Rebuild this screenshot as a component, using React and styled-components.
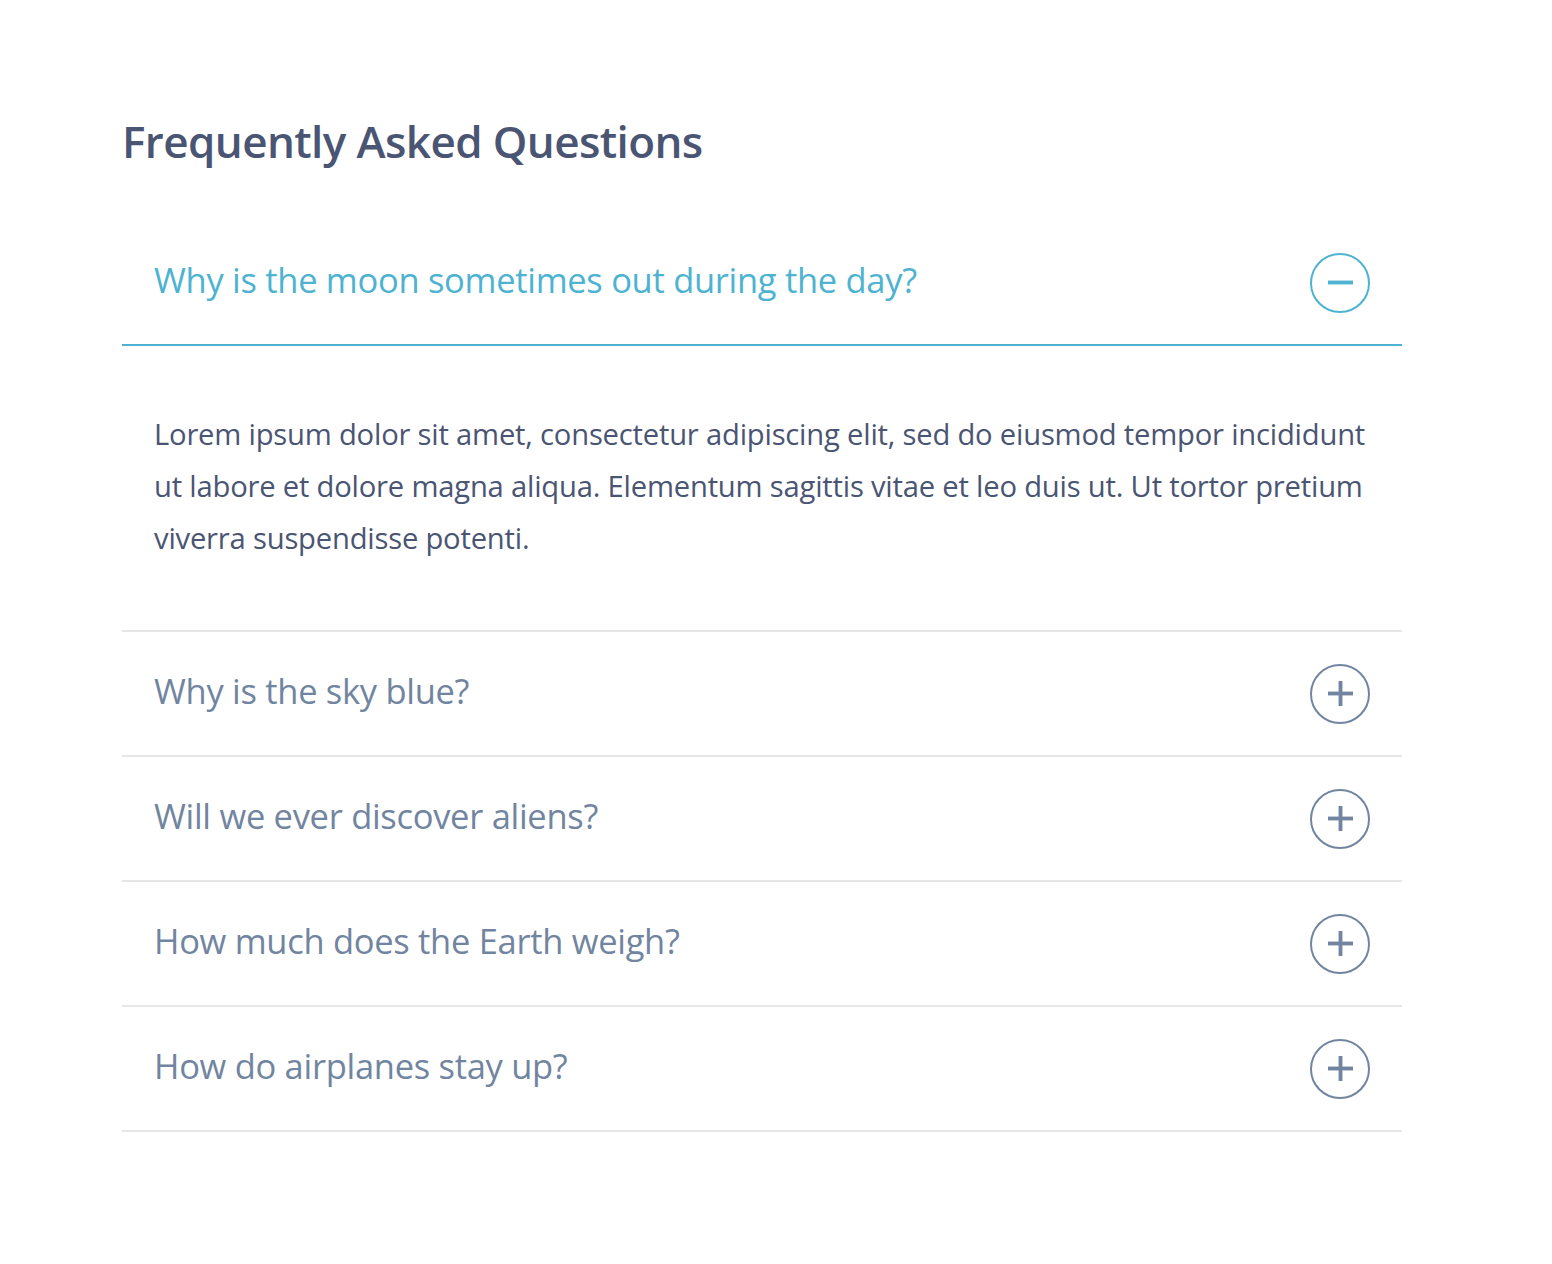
import { useState } from 'react'
import styled, { createGlobalStyle } from 'styled-components'

const questions = [
  {
    q: 'Why is the moon sometimes out during the day?',
    a: 'Lorem ipsum dolor sit amet, consectetur adipiscing elit, sed do eiusmod tempor incididunt ut labore et dolore magna aliqua. Elementum sagittis vitae et leo duis ut. Ut tortor pretium viverra suspendisse potenti.',
  },
  { q: 'Why is the sky blue?', a: 'Lorem ipsum dolor sit amet, consectetur adipiscing elit.' },
  { q: 'Will we ever discover aliens?', a: 'Lorem ipsum dolor sit amet, consectetur adipiscing elit.' },
  { q: 'How much does the Earth weigh?', a: 'Lorem ipsum dolor sit amet, consectetur adipiscing elit.' },
  { q: 'How do airplanes stay up?', a: 'Lorem ipsum dolor sit amet, consectetur adipiscing elit.' },
]

export default function App() {
  const [open, setOpen] = useState(0)

  return (
    <>
      <GlobalStyle />
      <Container>
        <Title>Frequently Asked Questions</Title>
        <List>
          {questions.map((item, i) => {
            const active = open === i
            return (
              <Item key={i} active={active}>
                <Question active={active} onClick={() => setOpen(active ? -1 : i)}>
                  <QuestionText>{item.q}</QuestionText>
                  <Toggle>
                    <svg viewBox="0 0 26 26">
                      <rect x="0" y="11" width="26" height="4" fill="currentColor" />
                      {!active && <rect x="11" y="0" width="4" height="26" fill="currentColor" />}
                    </svg>
                  </Toggle>
                </Question>
                {active && <Answer>{item.a}</Answer>}
              </Item>
            )
          })}
        </List>
      </Container>
    </>
  )
}

const GlobalStyle = createGlobalStyle`
  body {
    margin: 0;
    background: #fff;
    font-family: "Open Sans", "Noto Sans", sans-serif;
  }
`
const Container = styled.div`
  width: 1280px;
  margin: 0 0 0 122px;
  padding-top: 109px;
  padding-bottom: 130px;
`
const Title = styled.h1`
  margin: 0 0 48px;
  font-size: 44px;
  line-height: 64px;
  font-weight: 600;
  color: #4a5573;
  letter-spacing: -0.6px;
`
const List = styled.div`
  display: flex;
  flex-direction: column;
`
const Item = styled.div`
  border-bottom: ${p => (p.active ? 'none' : '2px solid #e6e6e8')};
`
const Question = styled.div`
  display: flex;
  align-items: center;
  justify-content: space-between;
  height: 123px;
  padding: 0 32px;
  cursor: pointer;
  color: ${p => (p.active ? '#4db3d1' : '#7185a0')};
  border-bottom: ${p => (p.active ? '2px solid #4db3d1' : 'none')};
`
const QuestionText = styled.span`
  font-size: 34.5px;
  line-height: 40px;
  letter-spacing: -0.3px;
  margin-top: -6px;
`
const Toggle = styled.span`
  display: flex;
  align-items: center;
  justify-content: center;
  width: 56px;
  height: 56px;
  border: 2px solid currentColor;
  border-radius: 50%;
  svg {
    width: 25px;
    height: 25px;
  }
`
const Answer = styled.p`
  margin: 0;
  padding: 62px 32px 66px;
  font-size: 29.2px;
  line-height: 52px;
  color: #4a5573;
  letter-spacing: -0.2px;
  border-bottom: 2px solid #e6e6e8;
`
